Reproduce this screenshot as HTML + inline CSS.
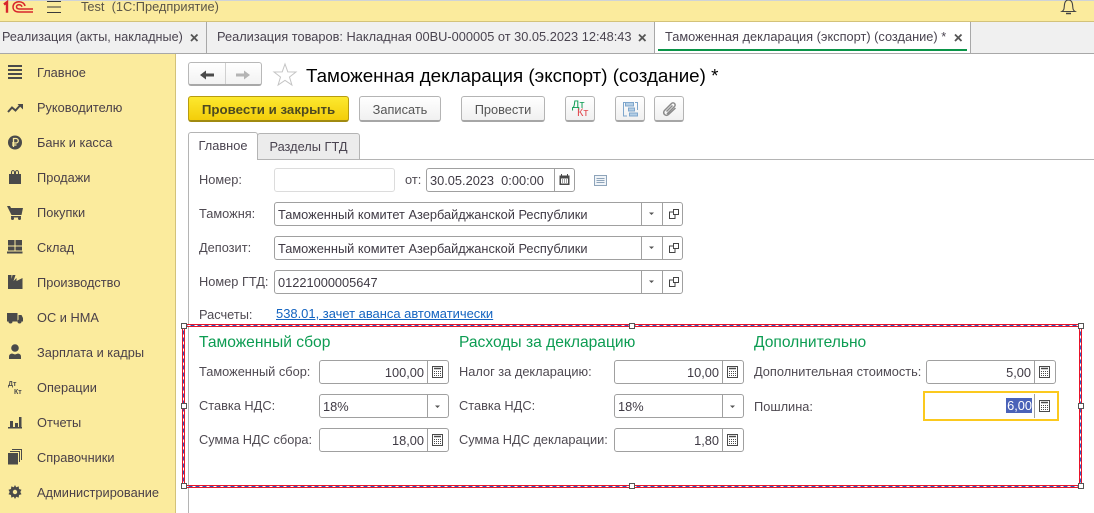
<!DOCTYPE html>
<html lang="ru"><head><meta charset="utf-8"><title>Таможенная декларация</title>
<style>
*{box-sizing:border-box}
html,body{margin:0;padding:0;width:1094px;height:513px;overflow:hidden;background:#fff}
body{position:relative;font-family:"Liberation Sans",sans-serif;font-size:12.8px;color:#4a4450}
.a{position:absolute}
.t{position:absolute;white-space:nowrap;line-height:16px}
.lab{color:#4f4a52}
.side{position:absolute;left:37px;white-space:nowrap;line-height:16px;color:#4a4048;font-size:12.8px}
.tab{position:absolute;top:22px;height:31px;line-height:30px;white-space:nowrap;color:#4a4450;font-size:12.8px}
.btn{position:absolute;top:96px;height:26px;border:1px solid #b4b4b4;border-bottom:2px solid #a6a6a6;border-radius:3px;background:linear-gradient(#fff,#f0f0f0);text-align:center;line-height:25px;color:#555}
.f{position:absolute;height:24px;border:1px solid #a0a0a0;border-radius:3px;background:#fff;line-height:23px;padding:0 3px;color:#3f3a44;white-space:nowrap}
.r{text-align:right}
.d{position:absolute;top:0;bottom:0;width:1px;background:#a0a0a0}
.g{position:absolute;top:334px;font-size:15.6px;line-height:18px;color:#0c9c52;white-space:nowrap}
.h{position:absolute;width:6px;height:6px;border:1px solid #555;background:#fff}
svg{position:absolute;overflow:visible}
</style></head><body>
<!-- top bar -->
<div class="a" style="left:0;top:0;width:1094px;height:22px;background:#fbeb9d;border-top:1px solid #cfd3d8;border-bottom:1px solid #d3c27a"></div>
<svg style="left:4px;top:1px" width="30" height="13" viewBox="0 0 30 13" fill="none">
<path d="M0 3.500 L3 1.200 V11.800" stroke="#d8262c" stroke-width="2.400"/>
<path d="M29 11 H15 C10 11 9 8 9 6 C9 3 11.500 .7 15 .7 C18 .7 20.500 2.500 21 5" stroke="#d8262c" stroke-width="1.500"/>
<path d="M29 8 H15.500 C13.500 8 12.500 7 12.500 5.800 C12.500 4.500 13.500 3.800 15 3.800 C16.500 3.800 17.500 4.500 18 5.800" stroke="#d8262c" stroke-width="1.500"/>
</svg>
<svg style="left:47px;top:1px" width="15" height="12"><path d="M0 .5H14M0 6H14M0 11.500H14" stroke="#3a3a3a" stroke-width="1.100"/></svg>
<div class="t" style="left:81px;top:-1px;color:#5c5648">Test&nbsp;&nbsp;(1С:Предприятие)</div>
<svg style="left:1061px;top:0" width="16" height="15" fill="none"><path d="M1 11.500 C3.500 10 3 8 3.500 4.500 C4 1 6 0 7.500 0 C9 0 11 1 11.500 4.500 C12 8 11.500 10 14 11.500 Z" stroke="#444" stroke-width="1.100"/><path d="M5 13.500H10" stroke="#444" stroke-width="1.500"/></svg>

<!-- tab bar -->
<div class="a" style="left:0;top:22px;width:1094px;height:32px;background:#f0f0f0;border-bottom:1px solid #a8a8a8"></div>
<div class="a" style="left:655px;top:22px;width:315px;height:31px;background:#fff"></div>
<div class="a" style="left:206px;top:22px;width:1px;height:31px;background:#a8a8a8"></div>
<div class="a" style="left:654px;top:22px;width:1px;height:31px;background:#a8a8a8"></div>
<div class="a" style="left:970px;top:22px;width:1px;height:31px;background:#a8a8a8"></div>
<div class="a" style="left:658px;top:49px;width:309px;height:2px;background:#0a9448"></div>
<div class="tab" style="left:2px;font-size:12.600px">Реализация (акты, накладные)</div>
<div class="tab" style="left:217px">Реализация товаров: Накладная 00BU-000005 от 30.05.2023 12:48:43</div>
<div class="tab" style="left:665px">Таможенная декларация (экспорт) (создание) *</div>
<svg style="left:0;top:0" width="1094" height="60" fill="none" stroke="#555" stroke-width="1.800"><path d="M191 34.500l6.500 6.500M197.500 34.500L191 41M639 34.500l6.500 6.500M645.500 34.500L639 41M955 34.500l6.500 6.500M961.500 34.500L955 41"/></svg>

<!-- sidebar -->
<div class="a" style="left:0;top:54px;width:176px;height:459px;background:#fbeb9d;border-right:1px solid #d3c27a"></div>
<div class="side" style="top:65px">Главное</div>
<div class="side" style="top:100px">Руководителю</div>
<div class="side" style="top:135px">Банк и касса</div>
<div class="side" style="top:170px">Продажи</div>
<div class="side" style="top:205px">Покупки</div>
<div class="side" style="top:240px">Склад</div>
<div class="side" style="top:275px">Производство</div>
<div class="side" style="top:310px">ОС и НМА</div>
<div class="side" style="top:345px">Зарплата и кадры</div>
<div class="side" style="top:380px">Операции</div>
<div class="side" style="top:415px">Отчеты</div>
<div class="side" style="top:450px">Справочники</div>
<div class="side" style="top:485px">Администрирование</div>
<svg style="left:0;top:0" width="30" height="513" fill="#4a4a4a">
<path d="M8 65h14v2H8zM8 69h14v2H8zM8 73h14v2H8zM8 77h14v2H8z"/>
<path d="M8 112 L12 107.500 L15.500 110.500 L20 105.500" fill="none" stroke="#4a4a4a" stroke-width="2"/><path d="M17.500 104h5.500v5.500z"/>
<circle cx="15" cy="142.500" r="7"/><path d="M13.500 147v-8.500h2.500a2 2 0 0 1 0 4.500h-4M12 145h4.500" fill="none" stroke="#fbeb9d" stroke-width="1.300"/>
<path d="M9 174h12v10H9z"/><path d="M11.500 176v-3.500a1.500 2 0 0 1 3 0v3.500M15.500 176v-3.500a1.500 2 0 0 1 3 0v3.500" fill="none" stroke="#4a4a4a" stroke-width="1.100"/>
<path d="M7 206h3l1 2h12l-1.500 7H11.500zM11 216h10v1.500H11z"/><circle cx="12.500" cy="218.500" r="1.500"/><circle cx="19.500" cy="218.500" r="1.500"/>
<path d="M8 240h6.500v5.500H8zM15.500 240H22v5.500h-6.500zM8 246.500h6.500v4H8zM15.500 246.500H22v4h-6.500zM7 251.500h15.500v2H7z"/>
<path d="M8 275h3.500v4l1-4h3l-2 6 3-3v3l6-3v11H8z"/>
<path d="M7 313h10.500v8.500H7zM18.500 315h3l1.500 3v3.500h-4.500z"/><circle cx="10.500" cy="321.500" r="2"/><circle cx="19.500" cy="321.500" r="2"/>
<circle cx="15" cy="348" r="3.800"/><path d="M9 359v-2.500q0-2.500 3-3l3 1 3-1q3 .5 3 3V359z"/>
<text x="8" y="386" font-size="7" font-weight="bold" font-family="Liberation Sans">Дт</text><text x="14" y="394" font-size="7" font-weight="bold" font-family="Liberation Sans">Кт</text>
<path d="M8 427h14v1.500H8zM10 421h3v6h-3zM15 423h3v4h-3zM19 417h2.500v10H19z"/>
<path d="M8 453h10v11.500H8z"/><path d="M10 451.500h9.500V462M12 449.500h9.500V460" fill="none" stroke="#4a4a4a"/>
<path d="M15 485l1.200 2.200 2.500-.8.300 2.600 2.500.8-1.200 2.200 1.200 2.200-2.500.8-.3 2.600-2.500-.8L15 499l-1.200-2.200-2.500.8-.3-2.600-2.500-.8 1.200-2.200-1.200-2.200 2.500-.8.3-2.600 2.500.8z"/><circle cx="15" cy="492" r="2.200" fill="#fbeb9d"/>
</svg>

<!-- nav -->
<div class="a" style="left:188px;top:62px;width:74px;height:24px;border:1px solid #b8b8b8;border-bottom:2px solid #a8a8a8;border-radius:3px;background:linear-gradient(#fff,#f2f2f2)"></div>
<div class="a" style="left:225px;top:63px;width:1px;height:21px;background:#d0d0d0"></div>
<svg style="left:200px;top:70px" width="14" height="11"><path d="M0 5L6 .5V3.500H14V6.500H6V9.500z" fill="#4a4a4a"/></svg>
<svg style="left:236px;top:70px" width="14" height="11"><path d="M14 5L8 .5V3.500H0V6.500H8V9.500z" fill="#b4b4b4"/></svg>
<svg style="left:273px;top:63px" width="24" height="23"><path d="M12 1L14.800 8.900 23 9 16.500 14 18.900 22 12 17.300 5.100 22 7.500 14 1 9 9.200 8.900z" fill="#fff" stroke="#c4c4c4"/></svg>
<div class="t" style="left:306px;top:65px;font-size:18.770px;line-height:21px;color:#000">Таможенная декларация (экспорт) (создание) *</div>

<!-- buttons -->
<div class="btn" style="left:188px;width:161px;background:linear-gradient(#fde92f,#f3cd0a);border:1px solid #b79c10;border-bottom:2px solid #a08a10;color:#4e4a20;font-weight:bold;font-size:13.300px">Провести и закрыть</div>
<div class="btn" style="left:359px;width:82px">Записать</div>
<div class="btn" style="left:461px;width:84px">Провести</div>
<div class="btn" style="left:565px;width:30px"></div>
<div class="btn" style="left:615px;width:30px"></div>
<div class="btn" style="left:654px;width:30px"></div>
<div class="t" style="left:572px;top:100px;font-size:11px;line-height:10px;color:#0c9c52">Дт</div>
<div class="t" style="left:577px;top:108px;font-size:11px;line-height:10px;color:#e0484e">Кт</div>
<svg style="left:623px;top:102px" width="15" height="15" fill="none" stroke="#7ea6cc"><rect x="2.500" y=".5" width="8" height="3.500" fill="#b4cfe6"/><rect x="5.500" y="6" width="6" height="3" fill="#b4cfe6"/><rect x="6.500" y="11" width="8" height="3" fill="#b4cfe6"/><path d="M2 .5H.5V14H4M12 .5H14.500V8"/></svg>
<svg style="left:662px;top:101px" width="15" height="15" fill="none" stroke="#8a8a8a" stroke-width="1.500"><path d="M5 13 L12.500 5.500 A2 2 0 0 0 9.500 2.500 L2.500 9.500 A2.800 2.800 0 0 0 6.500 13.500 L13.500 7"/><path d="M4.500 10.500L10.500 4.500"/></svg>

<!-- tabs -->
<div class="a" style="left:188px;top:159px;width:906px;height:1px;background:#b4b4b4"></div>
<div class="a" style="left:188px;top:159px;width:1px;height:354px;background:#b4b4b4"></div>
<div class="a" style="left:257px;top:133px;width:103px;height:27px;background:#ececec;border:1px solid #b4b4b4;border-radius:3px 3px 0 0;text-align:center;line-height:25px;color:#4a4450">Разделы ГТД</div>
<div class="a" style="left:188px;top:132px;width:70px;height:28px;background:#fff;border:1px solid #b4b4b4;border-bottom:0;border-radius:3px 3px 0 0;text-align:center;line-height:26px;color:#4a4450">Главное</div>

<!-- header fields -->
<div class="t lab" style="left:199px;top:172px">Номер:</div>
<div class="f" style="left:274px;top:168px;width:121px;border-color:#dcdcdc"></div>
<div class="t lab" style="left:405px;top:172px">от:</div>
<div class="f" style="left:426px;top:168px;width:149px">30.05.2023&nbsp;&nbsp;0:00:00<i class="d" style="left:127px"></i></div>
<svg style="left:559px;top:174px" width="12" height="12" fill="#4a4a4a"><path d="M.5 1.500h1.500V0h1v1.500h5V0h1v1.500H10.500V11H.5z"/><path d="M2 4.500h7V9.500H2z" fill="#fff"/><path d="M3 5.500h1v1H3zM5 5.500h1v1H5zM7 5.500h1v1H7zM3 7.500h1v1H3zM5 7.500h1v1H5zM7 7.500h1v1H7z"/></svg>
<svg style="left:594px;top:175px" width="14" height="12" fill="none" stroke="#8ea4ba"><rect x=".5" y=".5" width="12" height="10" fill="#f0f4f8"/><path d="M2.500 3.500h8M2.500 5.500h8M2.500 7.500h8"/></svg>

<div class="t lab" style="left:199px;top:206px">Таможня:</div>
<div class="f" style="left:274px;top:202px;width:409px">Таможенный комитет Азербайджанской Республики<i class="d" style="left:366px"></i><i class="d" style="left:387px"></i></div>
<div class="t lab" style="left:199px;top:240px">Депозит:</div>
<div class="f" style="left:274px;top:236px;width:409px">Таможенный комитет Азербайджанской Республики<i class="d" style="left:366px"></i><i class="d" style="left:387px"></i></div>
<div class="t lab" style="left:199px;top:274px">Номер ГТД:</div>
<div class="f" style="left:274px;top:270px;width:409px">01221000005647<i class="d" style="left:366px"></i><i class="d" style="left:387px"></i></div>
<svg style="left:640px;top:200px" width="40" height="100" fill="none">
<path d="M9 12.500h5l-2.500 2.500z" fill="#555"/><rect x="33.500" y="9.500" width="5" height="5" stroke="#444"/><path d="M33 12H29.500V18.500H35V15" stroke="#444"/>
<path d="M9 46.500h5l-2.500 2.500z" fill="#555"/><rect x="33.500" y="43.500" width="5" height="5" stroke="#444"/><path d="M33 46H29.500V52.500H35V49" stroke="#444"/>
<path d="M9 80.500h5l-2.500 2.500z" fill="#555"/><rect x="33.500" y="77.500" width="5" height="5" stroke="#444"/><path d="M33 80H29.500V86.500H35V83" stroke="#444"/>
</svg>
<div class="t lab" style="left:199px;top:307px">Расчеты:</div>
<div class="t" style="left:276px;top:306px;color:#1464c0;text-decoration:underline;font-size:12.950px">538.01, зачет аванса автоматически</div>

<!-- selection frame -->
<svg style="left:0;top:0" width="1094" height="513" fill="none">
<rect x="183.500" y="325.500" width="897" height="161" stroke="#e8142a" stroke-width="3"/>
<rect x="183.500" y="325.500" width="897" height="161" stroke="#fff" stroke-width="1"/>
<rect x="183.500" y="325.500" width="897" height="161" stroke="#2b5fc0" stroke-width="1" stroke-dasharray="4 3"/>
</svg>
<i class="h" style="left:181px;top:323px"></i><i class="h" style="left:629px;top:323px"></i><i class="h" style="left:1078px;top:323px"></i>
<i class="h" style="left:181px;top:403px"></i><i class="h" style="left:1078px;top:403px"></i>
<i class="h" style="left:181px;top:483px"></i><i class="h" style="left:629px;top:483px"></i><i class="h" style="left:1078px;top:483px"></i>

<div class="g" style="left:199px">Таможенный сбор</div>
<div class="g" style="left:459px">Расходы за декларацию</div>
<div class="g" style="left:754px">Дополнительно</div>

<div class="t lab" style="left:199px;top:364px">Таможенный сбор:</div>
<div class="f r" style="left:319px;top:360px;width:130px;padding-right:24px">100,00<i class="d" style="left:107px"></i></div>
<div class="t lab" style="left:199px;top:398px">Ставка НДС:</div>
<div class="f" style="left:319px;top:394px;width:130px">18%<i class="d" style="left:107px"></i></div>
<div class="t lab" style="left:199px;top:432px">Сумма НДС сбора:</div>
<div class="f r" style="left:319px;top:428px;width:130px;padding-right:24px">18,00<i class="d" style="left:107px"></i></div>

<div class="t lab" style="left:459px;top:364px">Налог за декларацию:</div>
<div class="f r" style="left:614px;top:360px;width:130px;padding-right:24px">10,00<i class="d" style="left:107px"></i></div>
<div class="t lab" style="left:459px;top:398px">Ставка НДС:</div>
<div class="f" style="left:614px;top:394px;width:130px">18%<i class="d" style="left:107px"></i></div>
<div class="t lab" style="left:459px;top:432px">Сумма НДС декларации:</div>
<div class="f r" style="left:614px;top:428px;width:130px;padding-right:24px">1,80<i class="d" style="left:107px"></i></div>

<div class="t lab" style="left:754px;top:364px">Дополнительная стоимость:</div>
<div class="f r" style="left:926px;top:360px;width:130px;padding-right:24px">5,00<i class="d" style="left:107px"></i></div>
<div class="t lab" style="left:754px;top:399px">Пошлина:</div>
<div class="a" style="left:923px;top:391px;width:136px;height:30px;border:2px solid #fbc91e;background:#fff"></div>
<div class="a" style="left:1034px;top:394px;width:1px;height:24px;background:#a0a0a0"></div>
<div class="t" style="left:1006px;top:398px;width:26px;height:15px;line-height:15px;background:#4a62b8;color:#fff;text-align:right">6,00</div>

<svg style="left:0;top:0" width="1094" height="513" fill="none">
<g stroke="#4a4a4a"><rect x="432.500" y="366.500" width="10" height="11"/><path d="M434 368.500h7" stroke-width="1.500"/><path d="M434 371.500h7M434 373.500h7M434 375.500h7" stroke-dasharray="1 1"/></g>
<g stroke="#4a4a4a"><rect x="432.500" y="434.500" width="10" height="11"/><path d="M434 436.500h7" stroke-width="1.500"/><path d="M434 439.500h7M434 441.500h7M434 443.500h7" stroke-dasharray="1 1"/></g>
<g stroke="#4a4a4a"><rect x="727.500" y="366.500" width="10" height="11"/><path d="M729 368.500h7" stroke-width="1.500"/><path d="M729 371.500h7M729 373.500h7M729 375.500h7" stroke-dasharray="1 1"/></g>
<g stroke="#4a4a4a"><rect x="727.500" y="434.500" width="10" height="11"/><path d="M729 436.500h7" stroke-width="1.500"/><path d="M729 439.500h7M729 441.500h7M729 443.500h7" stroke-dasharray="1 1"/></g>
<g stroke="#4a4a4a"><rect x="1039.500" y="366.500" width="10" height="11"/><path d="M1041 368.500h7" stroke-width="1.500"/><path d="M1041 371.500h7M1041 373.500h7M1041 375.500h7" stroke-dasharray="1 1"/></g>
<g stroke="#4a4a4a"><rect x="1039.500" y="400.500" width="10" height="11"/><path d="M1041 402.500h7" stroke-width="1.500"/><path d="M1041 405.500h7M1041 407.500h7M1041 409.500h7" stroke-dasharray="1 1"/></g>
<path d="M435 405.500h5l-2.500 2.500zM730 405.500h5l-2.500 2.500z" fill="#555"/>
</svg>
</body></html>
